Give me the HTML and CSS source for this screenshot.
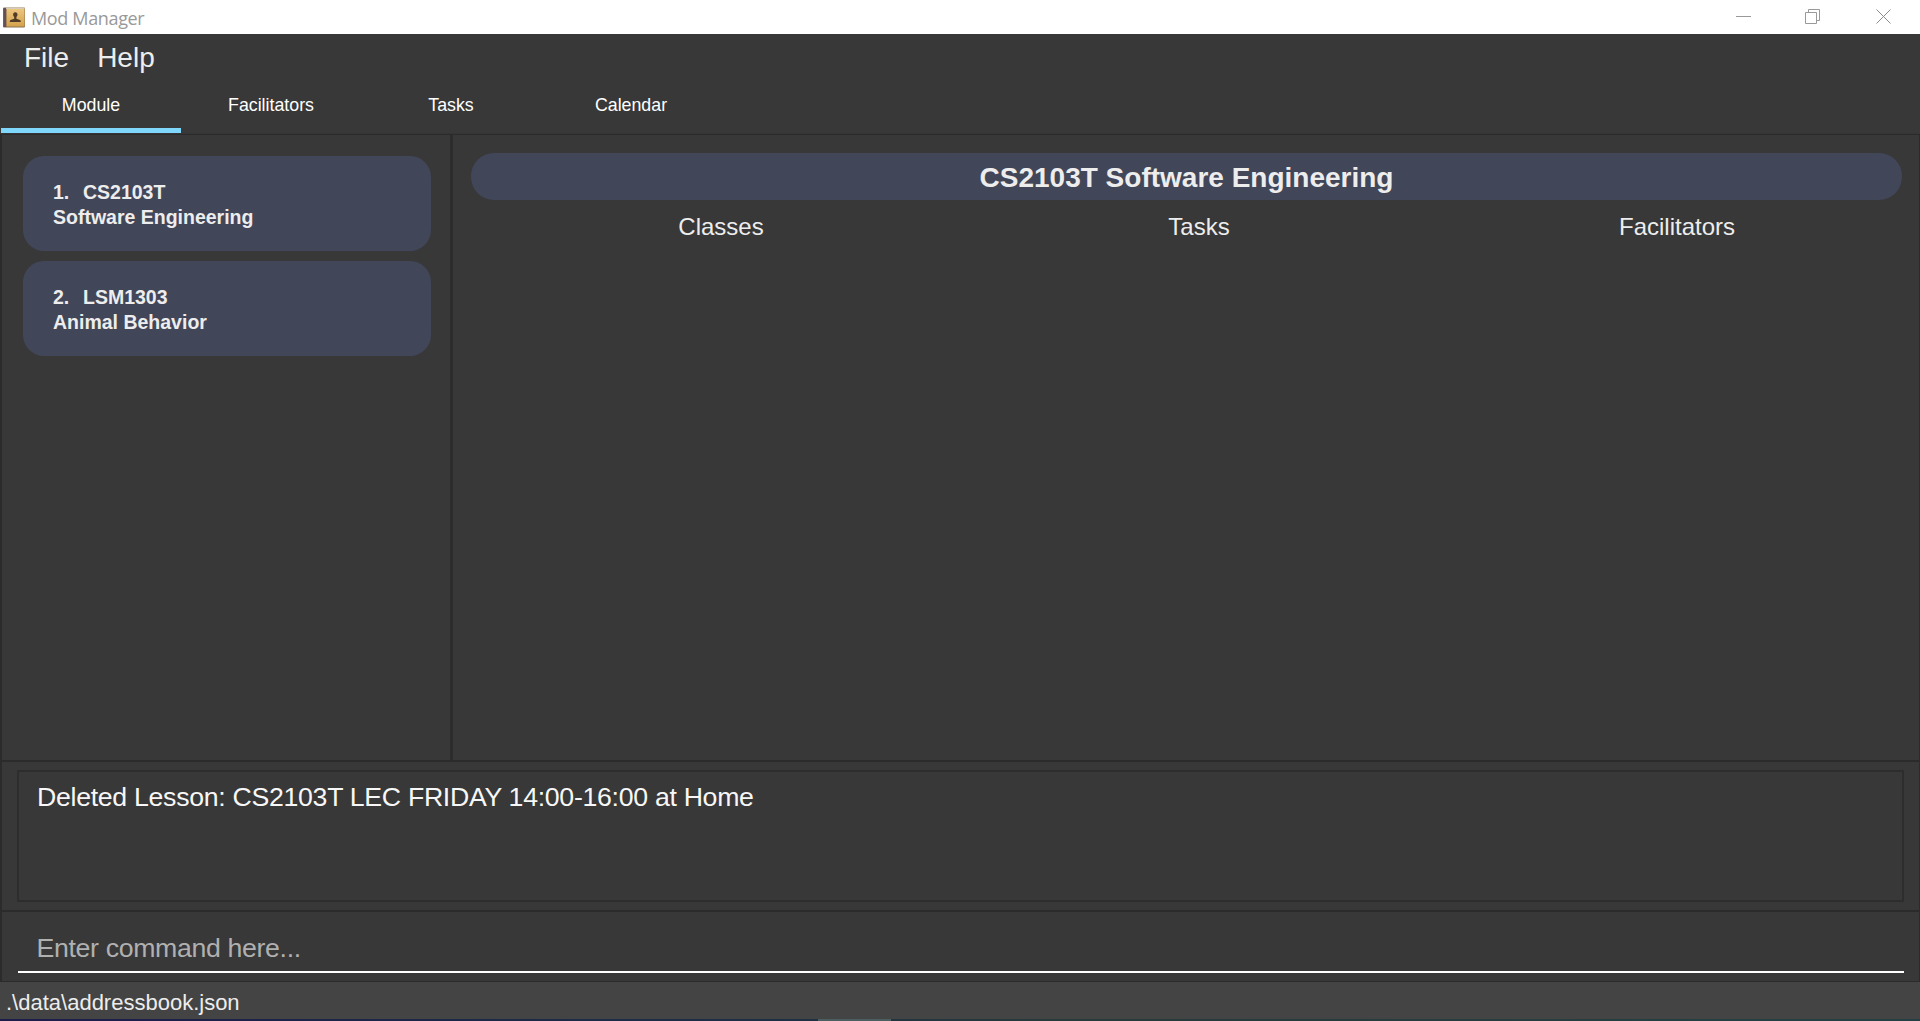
FILE: index.html
```html
<!DOCTYPE html>
<html lang="en">
<head>
<meta charset="utf-8">
<title>Mod Manager</title>
<link rel="stylesheet" href="styles.css">
</head>
<body>
<div class="window">
  <header class="titlebar">
    <svg class="app-icon" width="22" height="21" viewBox="0 0 22 21">
      <defs><linearGradient id="cover" x1="0" y1="0" x2="0" y2="1"><stop offset="0" stop-color="#ecc77f"/><stop offset="1" stop-color="#d5a24c"/></linearGradient></defs>
      <rect x="0" y="0.5" width="22" height="20" rx="1" fill="#8b714d"/>
      <rect x="0.5" y="1" width="3" height="19" fill="#645057"/>
      <rect x="3.5" y="1.5" width="18" height="18" fill="url(#cover)"/>
      <rect x="3" y="0.5" width="18.500" height="1.5" fill="#d8ccb4"/>
      <path d="M12.3 5.300c1.500 0 2.200 1 2.200 2.300 0 1.200-.6 1.900-1.100 2.500v1.700l3.500 1.200c.8.300.9.900.9 2H6.800c0-1.100.1-1.700.9-2l3.500-1.200v-1.700c-.5-.6-1.100-1.300-1.100-2.500 0-1.300.7-2.300 2.200-2.300z" fill="#513c27"/>
    </svg>
    <span class="app-name">Mod Manager</span>
    <svg class="controls" width="156" height="16" viewBox="0 0 156 16" fill="none" stroke="#999">
      <path d="M0 7.500h15M72.500 3.500V.5h11v11h-3M69.500 3.500h11v11h-11z"/>
      <path d="M140.500 .5l14 14M154.500 .5l-14 14" stroke="#8c8c8c"/>
    </svg>
  </header>
  <nav class="menubar"><span>File</span><span>Help</span></nav>
  <nav class="tabs">
    <div class="tab active">Module</div>
    <div class="tab">Facilitators</div>
    <div class="tab">Tasks</div>
    <div class="tab">Calendar</div>
  </nav>
  <main class="content">
    <aside class="modules">
      <article class="card"><div><span class="index">1.</span>CS2103T</div><div>Software Engineering</div></article>
      <article class="card"><div><span class="index">2.</span>LSM1303</div><div>Animal Behavior</div></article>
    </aside>
    <section class="details">
      <h1>CS2103T Software Engineering</h1>
      <div class="columns"><span>Classes</span><span>Tasks</span><span>Facilitators</span></div>
    </section>
  </main>
  <section class="result"><div class="result-box"><span>Deleted Lesson: CS2103T LEC FRIDAY 14:00-16:00 at Home</span></div></section>
  <section class="command"><div class="command-field"><span>Enter command here...</span></div></section>
  <footer class="status">.\data\addressbook.json</footer>
  <div class="desktop-edge"></div>
</div>
</body>
</html>
```
FILE: styles.css
```css
* { box-sizing: border-box; }
body { margin: 0; background: #383838; color: #ededed; font-family: "Liberation Sans", Arial, sans-serif; }
.window { width: 1920px; height: 1021px; display: flex; flex-direction: column; overflow: hidden; white-space: nowrap; }
.window > * { flex-shrink: 0; }
.titlebar { height: 34px; background: #fff; display: flex; align-items: flex-start; padding: 5px 28px 0 3px; }
.app-name { margin: 0 auto 0 6px; font: 18px/26px "Open Sans", sans-serif; color: #999; letter-spacing: -0.35px; }
.controls { margin-top: 4px; }
.app-icon { margin-top: 2px; }
.menubar { height: 47px; display: flex; gap: 28px; padding: 8px 24px 0; font-size: 28px; line-height: 32px; }
.tabs { height: 53px; display: flex; padding-left: 1px; border-bottom: 1px solid #353535; }
.tab { width: 180px; height: 52px; border-bottom: 5px solid transparent; color: #fff; font-size: 17.8px; line-height: 48px; text-align: center; }
.active { border-color: #7fd8fc; }
.content { height: 628px; display: flex; border: solid #2b2b2b; border-width: 1px 1px 2px 2px; }
.modules { flex: none; width: 451px; padding: 21px 19px 0 21px; border-right: 3px solid #2c2c2c; display: flex; flex-direction: column; gap: 10px; }
.card { height: 95px; padding: 24px 30px; border-radius: 21px; background: #424659; font-size: 19.5px; line-height: 25px; font-weight: bold; }
.index { display: inline-block; width: 30px; }
.details { flex: 1; min-width: 0; padding: 18px 17px 0 18px; }
h1 { height: 47px; margin: 0; border-radius: 23px; background: #424659; font-size: 28px; line-height: 49px; text-align: center; }
.columns { display: grid; grid-template-columns: 500px 456px 500px; text-align: center; font-size: 24px; line-height: 28px; padding-top: 13px; }
.result { height: 150px; border: solid #2b2b2b; border-width: 0 1px 2px 2px; padding: 8px 15px 0 15px; }
.result-box { height: 132px; border: 2px solid #2d2d2d; padding: 9px 18px; font-size: 26.7px; line-height: 32px; color: #f7f7f7; letter-spacing: -0.3px; }
.command { height: 70px; border: solid #2b2b2b; border-width: 0 1px 1px 2px; padding: 14px 15px 0 16px; }
.command-field { height: 47px; border-bottom: 2px solid #fff; padding: 6px 18.5px; font-size: 26.7px; line-height: 32px; color: #b0b0b0; letter-spacing: -0.34px; }
.status { height: 37px; background: #444; padding-left: 6px; font-size: 22px; line-height: 41px; }
.desktop-edge { height: 2px; background: linear-gradient(90deg, transparent 818px, #4a6060 818px 891px, transparent 891px), linear-gradient(90deg, #1c1c4b, #1c3045 40%, #263b3a 55%, #254044); }
```
